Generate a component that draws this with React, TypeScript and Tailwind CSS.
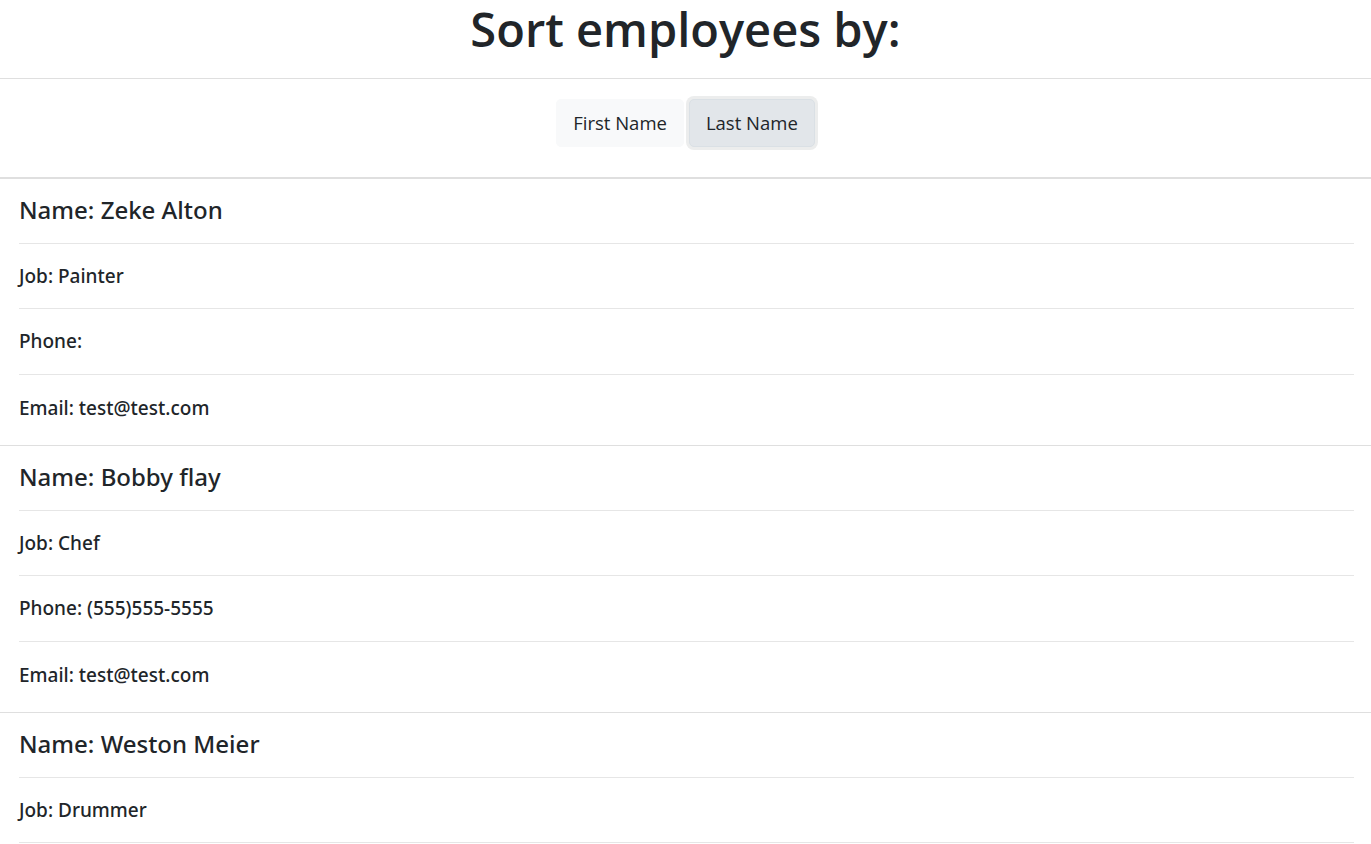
import React from "react";

interface Employee {
    name: string;
    job: string;
    phone: string;
    email: string;
}

const employees: Employee[] = [
    { name: "Zeke Alton", job: "Painter", phone: "", email: "test@test.com" },
    { name: "Bobby flay", job: "Chef", phone: "(555)555-5555", email: "test@test.com" },
    { name: "Weston Meier", job: "Drummer", phone: "", email: "test@test.com" },
];

const EmployeeCard: React.FC<{ employee: Employee }> = ({ employee }) => {
    return (
        <div className="border-t border-[#dfdfdf] font-['Noto_Sans','Open_Sans',sans-serif]">
            <div className="ml-[19px] mr-[17px]">
                {/* NAME */}
                <div className="h-[65px] pb-[3px] flex items-center border-b border-[#e6e6e6]">
                    <h4 className="text-[24px] font-medium">Name: {employee.name}</h4>
                </div>
                <div className="h-[65px] flex items-center border-b border-[#e6e6e6]">
                    <h6 className="text-[19px] font-medium">Job: {employee.job}</h6>
                </div>
                <div className="h-[66px] flex items-center border-b border-[#e6e6e6]">
                    <h6 className="text-[19px] font-medium">Phone: {employee.phone}</h6>
                </div>
                <div className="h-[70px] pb-[4px] flex items-center">
                    <h6 className="text-[19px] font-medium">Email: {employee.email}</h6>
                </div>
            </div>
        </div>
    );
};

export default function App() {
    return (
        <div className="min-h-screen bg-white text-[#212529] font-['Open_Sans','Noto_Sans',sans-serif]">
            {/* HEADER */}
            <div className="h-[79px] border-b border-[#dfdfdf]">
                <h1 className="text-[47px] leading-[58px] font-semibold text-center">Sort employees by:</h1>
            </div>

            {/* SORT BUTTONS */}
            <div className="h-[99px] pt-[20px] flex justify-center items-start gap-[5px] border-b border-[#dfdfdf]">
                <button className="h-[48px] px-[16px] text-[18.5px] bg-[#f8f9fa] border border-[#f8f9fa] rounded-[5px]">
                    First Name
                </button>
                <button className="h-[48px] px-[16px] text-[18.5px] bg-[#e2e6ea] border border-[#dae0e5] rounded-[5px] shadow-[0_0_0_3px_#eceded]">
                    Last Name
                </button>
            </div>

            {employees.map((e, i) => (
                <EmployeeCard key={i} employee={e} />
            ))}
        </div>
    );
}
